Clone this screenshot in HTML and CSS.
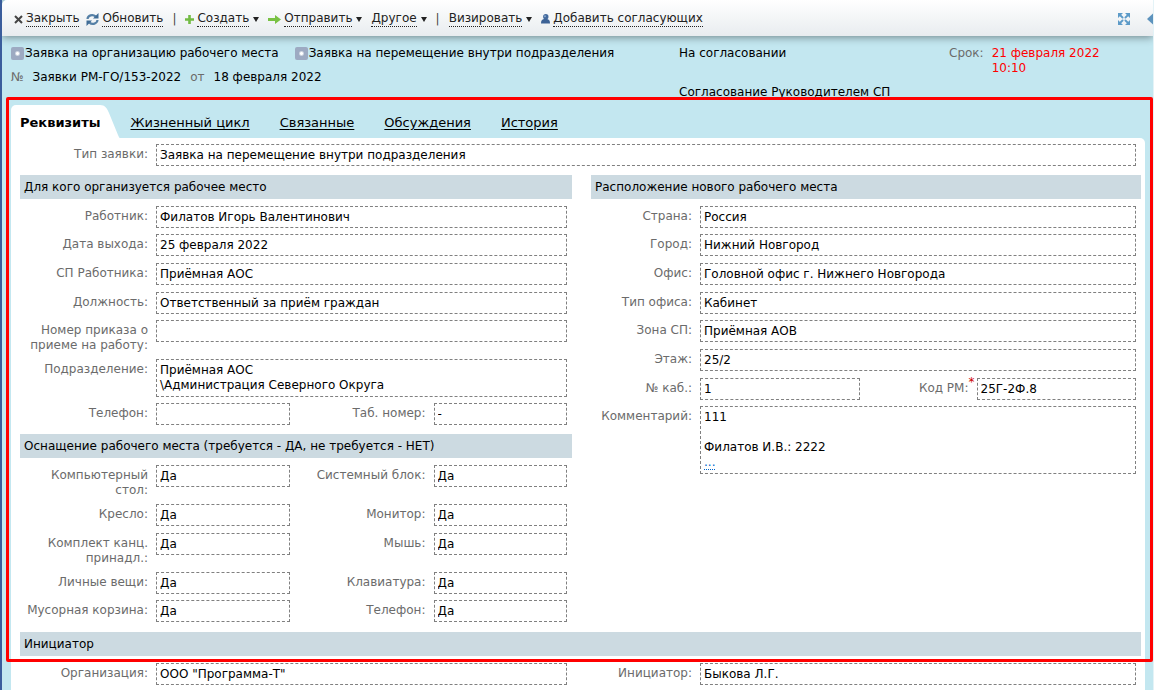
FILE: index.html
```html
<!DOCTYPE html>
<html lang="ru">
<head>
  <meta charset="UTF-8" />
  <title>Заявка РМ-ГО/153-2022</title>
  <link rel="stylesheet" href="styles.css">
</head>
<body>
  <div class="toolbar">
    <button type="button" class="tool">
      <svg class="icon" width="9" height="9" viewBox="0 0 9 9"><path d="M1 1l7 7M8 1L1 8" stroke="#444" stroke-width="2"/></svg>
      <span>Закрыть</span>
    </button>
    <button type="button" class="tool tool-refresh">
      <svg class="icon" width="13" height="13" viewBox="0 0 13 13" fill="none" stroke="#5580a6" stroke-width="2.2"><path d="M1.5 6C1.8 2.5 6.5 0.8 9.6 3.4M11.5 7C11.2 10.5 6.5 12.2 3.4 9.6"/><path d="M12.5 0v5.500h-5.500zM0.500 13v-5.500h5.500z" fill="#3f6c96" stroke="none"/></svg>
      <span>Обновить</span>
    </button>
    <i class="divider">|</i>
    <button type="button" class="tool">
      <svg class="icon" width="9" height="9" viewBox="0 0 9 9"><path d="M4.500 0v9M0 4.500h9" stroke="#72bb43" stroke-width="2.600"/></svg>
      <span>Создать</span><b class="caret"></b>
    </button>
    <button type="button" class="tool">
      <svg class="icon" width="13" height="9" viewBox="0 0 13 9"><path d="M0 3h7V0l6 4.500L7 9V6H0z" fill="#78c143"/></svg>
      <span>Отправить</span><b class="caret"></b>
    </button>
    <button type="button" class="tool"><span>Другое</span><b class="caret"></b></button>
    <i class="divider">|</i>
    <button type="button" class="tool"><span>Визировать</span><b class="caret"></b></button>
    <button type="button" class="tool">
      <svg class="icon" width="9" height="10" viewBox="0 0 9 10"><path d="M0 9.500C0 6.500 1 5.500 3 5h3c2 .5 3 1.500 3 4.500z" fill="#3c6296"/><circle cx="4.800" cy="2.800" r="2.700" fill="#43699d"/><circle cx="4" cy="2.200" r="1" fill="#86a6cb"/></svg>
      <span>Добавить согласующих</span>
    </button>
    <div class="toolbar-right">
      <button type="button" class="tool" aria-label="Развернуть">
        <svg width="12" height="12" viewBox="0 0 12 12"><path d="M0 0h5L0 5zM12 0v5L7 0zM0 12V7l5 5zM12 12H7l5-5z" fill="#5d9bc8"/><path d="M1.500 1.500l9 9M10.500 1.500l-9 9" stroke="#5d9bc8" stroke-width="1.800"/><path d="M4 6l2-2 2 2-2 2z" fill="#dfeaf2"/></svg>
      </button>
      <button type="button" class="tool" aria-label="Панель">
        <svg width="6" height="12" viewBox="0 0 6 12"><path d="M0 6l6-5.500v11z" fill="#5d93bd"/></svg>
      </button>
    </div>
  </div>

  <div class="info">
    <div class="info-main">
      <div class="info-line">
        <span class="kind"><i class="dot"></i>Заявка на организацию рабочего места</span>
        <span class="kind"><i class="dot"></i>Заявка на перемещение внутри подразделения</span>
      </div>
      <div class="info-line number">
        <span class="muted">№</span>
        <span>Заявки РМ-ГО/153-2022</span>
        <span class="muted">от</span>
        <span class="date">18 февраля 2022</span>
      </div>
    </div>
    <div class="status">
      <div>На согласовании</div>
      <div>Согласование Руководителем СП</div>
    </div>
    <div class="deadline">
      <span class="muted">Срок:</span>
      <span class="overdue">21 февраля 2022<br>10:10</span>
    </div>
  </div>

  <div class="card">
    <div class="frame"></div>
    <nav class="tabs">
      <a href="#" class="tab active">Реквизиты<svg class="slope" width="20" height="34" viewBox="0 0 20 34"><path d="M0 0C5 0 7 3 9 8L18 30C19 32 19 33 20 33V34H0z" fill="#fff"/></svg></a>
      <a href="#" class="tab">Жизненный цикл</a>
      <a href="#" class="tab">Связанные</a>
      <a href="#" class="tab">Обсуждения</a>
      <a href="#" class="tab">История</a>
    </nav>

    <form class="panel">
      <div class="row wide">
        <label for="type">Тип заявки:</label>
        <input id="type" class="field" value="Заявка на перемещение внутри подразделения" readonly />
      </div>

      <div class="columns">
        <div class="column left">
          <h2>Для кого организуется рабочее место</h2>
          <div class="rows">
            <div class="row"><label for="worker">Работник:</label><input id="worker" class="field" value="Филатов Игорь Валентинович" readonly /></div>
            <div class="row"><label for="start">Дата выхода:</label><input id="start" class="field" value="25 февраля 2022" readonly /></div>
            <div class="row"><label for="unit">СП Работника:</label><input id="unit" class="field" value="Приёмная АОС" readonly /></div>
            <div class="row"><label for="post">Должность:</label><input id="post" class="field" value="Ответственный за приём граждан" readonly /></div>
            <div class="row"><label for="order">Номер приказа о приеме на работу:</label><input id="order" class="field" value="" readonly /></div>
            <div class="row"><label for="dept">Подразделение:</label><textarea id="dept" class="field" rows="2" readonly>Приёмная АОС
\Администрация Северного Округа</textarea></div>
            <div class="row pair">
              <label for="phone">Телефон:</label><input id="phone" class="field" value="" readonly />
              <label for="tab-number">Таб. номер:</label><input id="tab-number" class="field" value="-" readonly />
            </div>
          </div>

          <h2>Оснащение рабочего места (требуется - ДА, не требуется - НЕТ)</h2>
          <div class="rows">
            <div class="row pair">
              <label for="desk">Компьютерный стол:</label><input id="desk" class="field" value="Да" readonly />
              <label for="pc">Системный блок:</label><input id="pc" class="field" value="Да" readonly />
            </div>
            <div class="row pair">
              <label for="chair">Кресло:</label><input id="chair" class="field" value="Да" readonly />
              <label for="monitor">Монитор:</label><input id="monitor" class="field" value="Да" readonly />
            </div>
            <div class="row pair">
              <label for="stationery">Комплект канц. принадл.:</label><input id="stationery" class="field" value="Да" readonly />
              <label for="mouse">Мышь:</label><input id="mouse" class="field" value="Да" readonly />
            </div>
            <div class="row pair">
              <label for="things">Личные вещи:</label><input id="things" class="field" value="Да" readonly />
              <label for="keyboard">Клавиатура:</label><input id="keyboard" class="field" value="Да" readonly />
            </div>
            <div class="row pair">
              <label for="bin">Мусорная корзина:</label><input id="bin" class="field" value="Да" readonly />
              <label for="desk-phone">Телефон:</label><input id="desk-phone" class="field" value="Да" readonly />
            </div>
          </div>
        </div>

        <div class="column right">
          <h2>Расположение нового рабочего места</h2>
          <div class="rows">
            <div class="row"><label for="country">Страна:</label><input id="country" class="field" value="Россия" readonly /></div>
            <div class="row"><label for="city">Город:</label><input id="city" class="field" value="Нижний Новгород" readonly /></div>
            <div class="row"><label for="office">Офис:</label><input id="office" class="field" value="Головной офис г. Нижнего Новгорода" readonly /></div>
            <div class="row"><label for="office-type">Тип офиса:</label><input id="office-type" class="field" value="Кабинет" readonly /></div>
            <div class="row"><label for="zone">Зона СП:</label><input id="zone" class="field" value="Приёмная АОВ" readonly /></div>
            <div class="row"><label for="floor">Этаж:</label><input id="floor" class="field" value="25/2" readonly /></div>
            <div class="row pair">
              <label for="room">№ каб.:</label><input id="room" class="field" value="1" readonly />
              <label for="code" class="required">Код РМ:</label><input id="code" class="field" value="25Г-2Ф.8" readonly />
            </div>
            <div class="row">
              <span class="label">Комментарий:</span>
              <div class="field">111<br><br>Филатов И.В.: 2222<br><a href="#" class="more">...</a></div>
            </div>
          </div>
        </div>
      </div>

      <h2>Инициатор</h2>
      <div class="columns">
        <div class="column left">
          <div class="row"><label for="company">Организация:</label><input id="company" class="field" value='ООО "Программа-Т"' readonly /></div>
        </div>
        <div class="column right">
          <div class="row"><label for="initiator">Инициатор:</label><input id="initiator" class="field" value="Быкова Л.Г." readonly /></div>
        </div>
      </div>
    </form>
  </div>
</body>
</html>
```
FILE: styles.css
```css
:root {
  --sky: #c3e7f0;
  --section: #ccdae1;
  --muted: #6b6b6b;
  --label-width: 128px;
}

* {
  margin: 0;
  padding: 0;
  box-sizing: border-box;
}

body {
  height: 100vh;
  overflow: hidden;
  background: var(--sky);
  border-left: 2px solid #3a5d9c;
  border-right: 1px solid #e4f3f7;
  font-family: "DejaVu Sans", Verdana, sans-serif;
  font-size: 12px;
  line-height: 15px;
  color: #000;
}

/* toolbar */
.toolbar {
  position: relative;
  display: flex;
  align-items: center;
  gap: 9px;
  height: 36px;
  padding: 2px 0 0 12px;
  border-top-left-radius: 5px;
  background: linear-gradient(#fff, #e8ecef);
  box-shadow: 0 1px 8px rgba(0, 0, 0, 0.45);
}

.tool {
  display: flex;
  align-items: center;
  gap: 3px;
  border: none;
  background: none;
  font: inherit;
  color: #222;
  white-space: nowrap;
  cursor: pointer;
}

.tool span {
  border-bottom: 1px dotted #222;
}

.tool-refresh {
  margin-left: -2px;
}

.divider {
  font-style: normal;
  color: #444;
}

.caret {
  margin-left: 1px;
  border: 3px solid transparent;
  border-top: 5px solid #222;
  border-bottom: none;
}

.toolbar-right {
  display: flex;
  gap: 17px;
  margin-left: auto;
}

/* request summary */
.info {
  display: grid;
  grid-template-columns: 668fr 270fr 204fr;
  height: 61px;
  padding: 10px 0 0 9px;
}

.info-line {
  display: flex;
  gap: 16px;
  white-space: nowrap;
}

.number {
  gap: 9px;
  margin-top: 9px;
}

.kind {
  display: flex;
  align-items: center;
  gap: 1px;
}

.dot {
  width: 13px;
  height: 13px;
  border-radius: 2px;
  background: radial-gradient(circle, #fff 1px, #9daac2 3px);
}

.muted {
  color: var(--muted);
}

.status {
  display: flex;
  flex-direction: column;
  gap: 24px;
  white-space: nowrap;
}

.deadline {
  display: flex;
  gap: 8px;
}

.overdue {
  color: #f00;
}

/* tabs */
.card {
  position: relative;
  padding: 8px 8px 0 9px;
}

.frame {
  position: absolute;
  top: 0;
  left: 4px;
  right: 0;
  height: 565px;
  border: 3px solid #f00;
  border-radius: 2px;
  pointer-events: none;
}

.tabs {
  display: flex;
  gap: 30px;
  height: 33px;
  padding-left: 9px;
  font-size: 13px;
  line-height: 35px;
}

.tab {
  color: #000;
  text-underline-offset: 2px;
}

.tab.active {
  position: relative;
  margin-left: -9px;
  padding-left: 9px;
  border-top-left-radius: 5px;
  background: #fff;
  font-weight: bold;
  text-decoration: none;
}

.slope {
  position: absolute;
  top: 0;
  left: 100%;
}

/* form */
.panel {
  padding: 6px 4px 0 9px;
  border-top-right-radius: 5px;
  background: #fff;
}

.columns {
  display: grid;
  grid-template-columns: 552fr 550fr;
  gap: 19px;
}

.right {
  --label-width: 101px;
}

h2 {
  height: 24px;
  margin: 3px 0 7px;
  padding-left: 4px;
  background: var(--section);
  font-size: 12px;
  font-weight: normal;
  line-height: 24px;
}

.row {
  display: grid;
  grid-template-columns: var(--label-width) 1fr;
  column-gap: 8px;
  align-items: start;
  min-height: 29px;
  padding: 0 5px 6px 0;
}

.wide,
.rows .row:nth-child(3n + 1) {
  min-height: 28px;
}

.pair {
  grid-template-columns: var(--label-width) 1fr var(--label-width) 1fr;
}

label,
.label {
  padding-top: 3px;
  color: var(--muted);
  text-align: right;
}

.field {
  display: block;
  width: 100%;
  min-width: 0;
  padding: 3px;
  border: 1px dashed #808080;
  background: #fff;
  font: inherit;
  color: #000;
  outline: none;
  resize: none;
  overflow: hidden;
}

input.field {
  height: 22px;
  padding: 2px 3px 3px;
}

.required {
  position: relative;
}

.required::after {
  content: "*";
  position: absolute;
  top: -3px;
  right: -6px;
  color: #c00;
}

.more {
  border-bottom: 1px dotted #06c;
  color: #06c;
  line-height: 12px;
  text-decoration: none;
}
```
